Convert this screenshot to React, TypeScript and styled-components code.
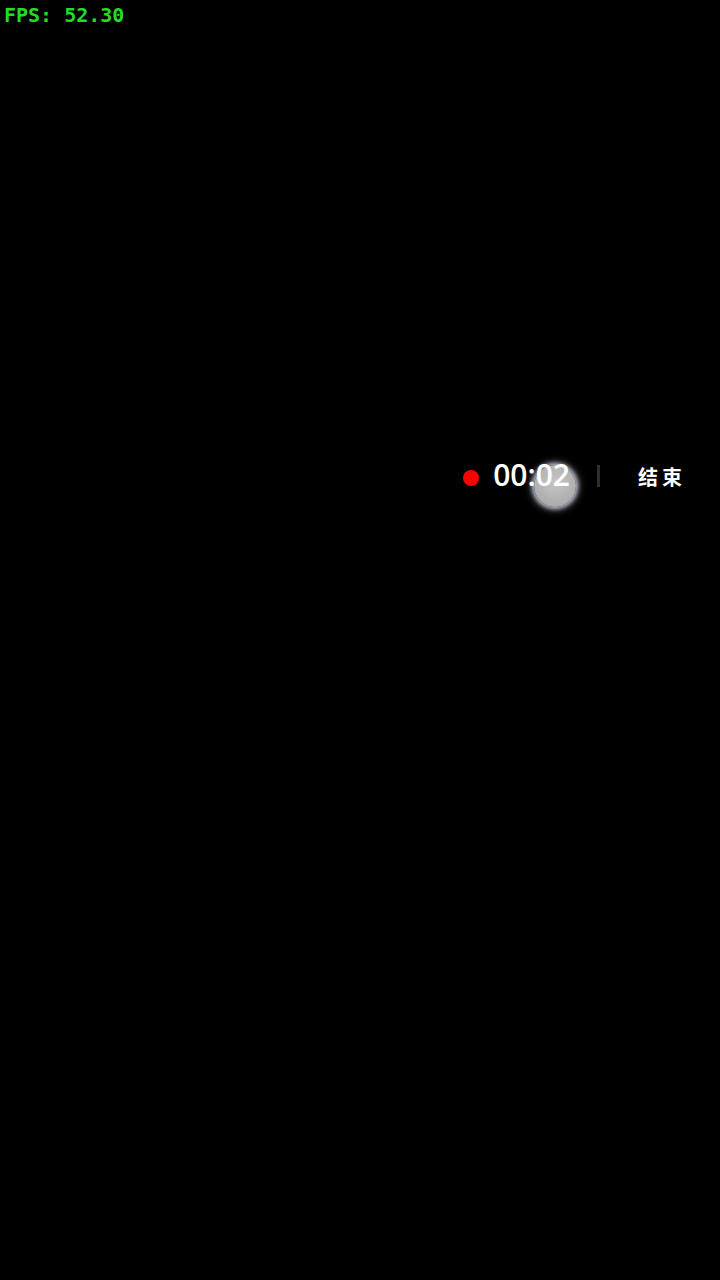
import React from "react";
import styled, { createGlobalStyle } from "styled-components";

const Global = createGlobalStyle`
  html, body { margin: 0; padding: 0; background: #000; }
  #root { min-height: 1280px; }
`;

const Page = styled.div`
  position: relative;
  width: 720px;
  height: 1280px;
  background: #000;
  display: flex;
  flex-direction: column;
`;

const Fps = styled.div`
  font-family: "DejaVu Sans Mono", monospace;
  font-weight: bold;
  font-size: 20px;
  line-height: 30px;
  color: #22dd22;
  padding-left: 4px;
`;

const BarRow = styled.div`
  margin-top: 428px;
  display: flex;
  justify-content: flex-end;
  padding-right: 34px;
`;

const Bar = styled.div`
  position: relative;
  display: flex;
  align-items: center;
  height: 36px;
`;

const Dot = styled.div`
  width: 16px;
  height: 16px;
  border-radius: 50%;
  background: #ff0000;
  margin-top: 4px;
`;

const Timer = styled.div`
  position: relative;
  z-index: 2;
  margin-left: 14px;
  font-family: "Open Sans", sans-serif;
  font-size: 30px;
  font-weight: 600;
  color: #fff;
  margin-top: -3px;
`;

const Sep = styled.div`
  width: 3px;
  height: 22px;
  background: #2e2e2e;
  margin-left: 27px;
`;

const End = styled.div`
  margin-left: 38px;
  font-family: "Noto Sans CJK SC", sans-serif;
  font-weight: bold;
  font-size: 20px;
  letter-spacing: 4px;
  color: #fff;
`;

const Touch = styled.div`
  position: absolute;
  z-index: 1;
  left: 71px;
  top: 7px;
  width: 42px;
  height: 42px;
  border-radius: 50%;
  background: radial-gradient(circle at 50% 40%, #d8d8d8 0%, #bcbcbc 70%, #aaaaaa 100%);
  box-shadow: 0 0 4px 2px rgba(235, 235, 255, 0.85), 0 0 9px 3px rgba(200, 200, 235, 0.4);
  opacity: 0.92;
`;

export default function App() {
  return (
    <Page>
      <Global />
      <Fps>FPS: 52.30</Fps>
      <BarRow>
        <Bar>
          <Dot />
          <Timer>00:02</Timer>
          <Sep />
          <End>结束</End>
          <Touch />
        </Bar>
      </BarRow>
    </Page>
  );
}
